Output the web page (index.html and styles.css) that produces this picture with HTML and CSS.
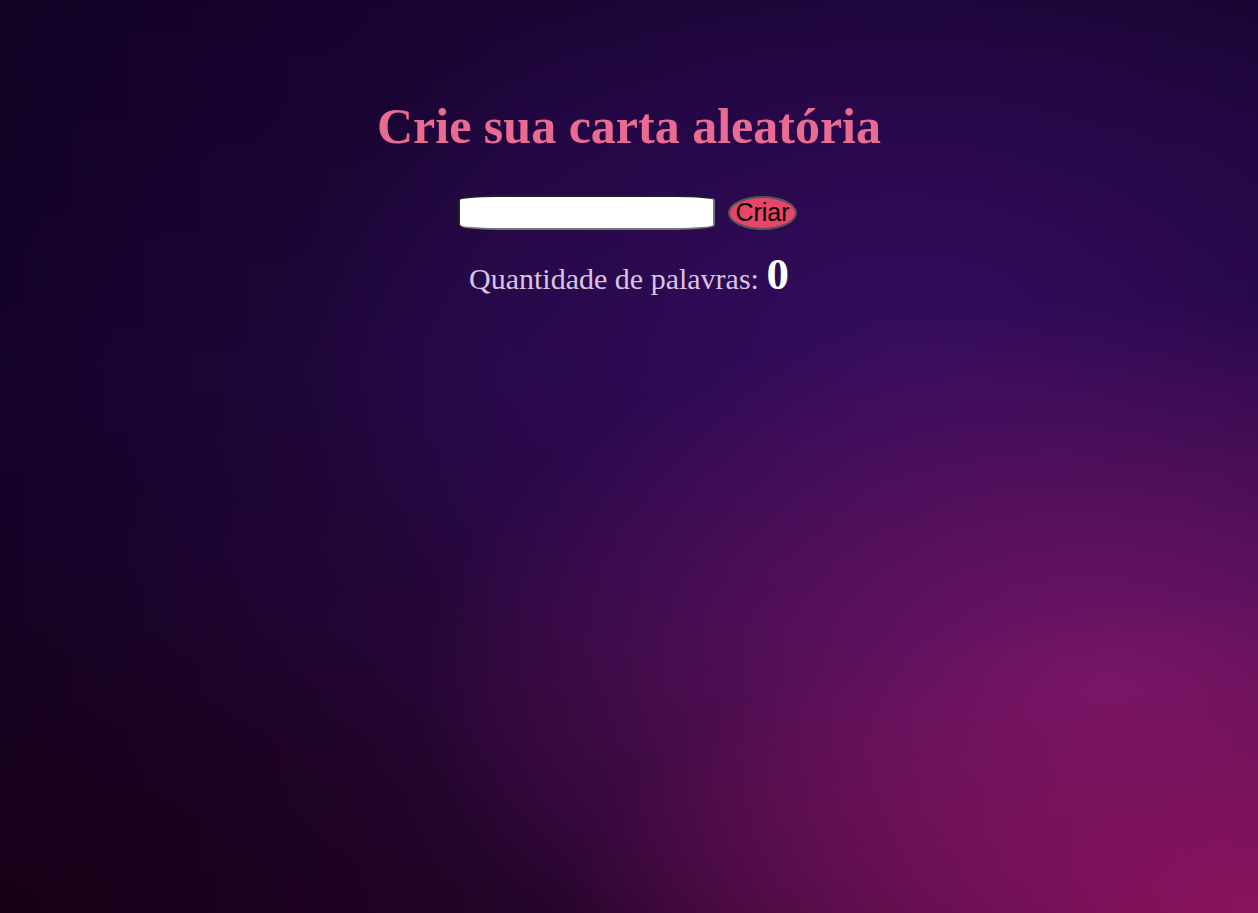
FILE: index.html
```html
<!DOCTYPE html>
<html lang="pt-BR">
<head>
<meta charset="utf-8">
<title>Carta aleatória</title>
<link rel="stylesheet" href="styles.css">
</head>
<body>
<main class="page">
  <h1 class="title">Crie sua carta aleatória</h1>
  <div class="form-row">
    <input class="word-input" type="text" aria-label="Texto">
    <button class="create-btn" type="button">Criar</button>
  </div>
  <p class="count">Quantidade de palavras: <span class="count-num">0</span></p>
</main>
</body>
</html>
```
FILE: styles.css
```css
html, body {
  height: 100%;
}
body {
  margin: 0;
  font-family: "Liberation Serif", "Times New Roman", serif;
  background-color: #1c0438;
  background-image:
    radial-gradient(ellipse 55% 35% at 100% 100%, rgba(146, 20, 96, 0.9) 0%, rgba(146, 20, 96, 0) 100%),
    radial-gradient(ellipse 55% 42% at 88% 75%, rgba(118, 22, 106, 0.95) 0%, rgba(110, 20, 100, 0.7) 40%, rgba(90, 16, 90, 0) 100%),
    radial-gradient(ellipse 48% 45% at 72% 38%, rgba(52, 12, 94, 1) 0%, rgba(46, 10, 86, 0.6) 55%, rgba(40, 8, 76, 0) 100%),
    radial-gradient(ellipse 45% 40% at 0% 100%, rgba(24, 0, 20, 0.8) 0%, rgba(24, 0, 20, 0) 100%),
    linear-gradient(90deg, rgba(14, 0, 30, 0.7) 0%, rgba(14, 0, 30, 0) 40%),
    linear-gradient(180deg, #1a0434 0%, #240844 40%, #280638 75%, #26042c 100%);
  background-attachment: fixed;
}
.page {
  display: flex;
  flex-direction: column;
  align-items: center;
  padding-top: 98px;
}
.title {
  margin: 0;
  font-size: 50px;
  line-height: 56px;
  font-weight: bold;
  color: #e96b92;
}
.form-row {
  display: flex;
  align-items: center;
  gap: 13px;
  margin-top: 41px;
  padding-right: 3px;
}
.word-input {
  box-sizing: border-box;
  width: 257px;
  height: 35px;
  border: 2px inset #767676;
  border-radius: 40px / 5px;
  background: #fff;
  padding: 0 6px;
  font-size: 16px;
}
.create-btn {
  box-sizing: border-box;
  width: 69px;
  height: 34px;
  border: 2px solid #555;
  border-radius: 50%;
  background: #e8456a;
  color: #000;
  font-family: "Liberation Sans", Arial, sans-serif;
  font-size: 25px;
  line-height: 1;
  padding: 0;
}
.count {
  margin: 19px 0 0;
  font-size: 30px;
  line-height: 50px;
  color: #dcc2e4;
}
.count-num {
  font-size: 45px;
  font-weight: bold;
  color: #fff;
}
```
